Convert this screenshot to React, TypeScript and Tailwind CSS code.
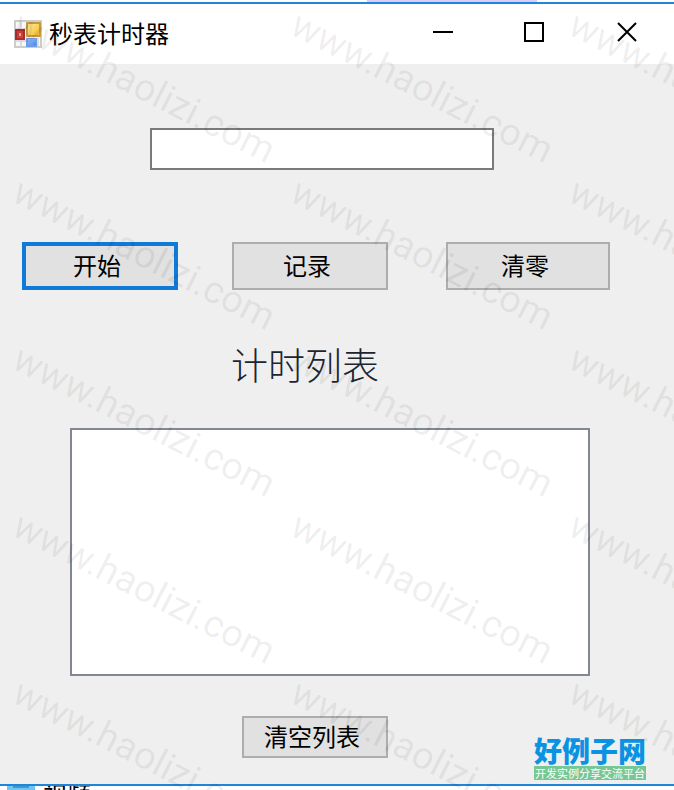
import { useState } from "react";
import type { ReactNode } from "react";

const WATERMARKS = Array.from({ length: 15 }, (_, i) => i);

function AppIcon() {
  return (
    <svg viewBox="0 0 28 28" className="h-7 w-7 shrink-0" aria-hidden="true">
      <defs>
        <linearGradient id="gold" x1="0" y1="0" x2="1" y2="1">
          <stop offset="0" stopColor="#ffe996" />
          <stop offset="1" stopColor="#f5bd30" />
        </linearGradient>
        <linearGradient id="sky" x1="0" y1="0" x2="1" y2="1">
          <stop offset="0" stopColor="#9cc4ff" />
          <stop offset="1" stopColor="#4a86e6" />
        </linearGradient>
      </defs>
      <rect x="1" y="1" width="26" height="26" fill="#f7f7f7" stroke="#cccccc" strokeWidth="2" />
      <path d="M7 1v9M7 20v7M1 9h10M1 21h11M24 18v9" stroke="#d4d4d4" strokeWidth="1.5" />
      <rect x="12" y="2" width="15" height="15" rx="1" fill="#c39a40" />
      <rect x="14" y="4" width="11" height="11" fill="url(#gold)" />
      <rect x="1" y="9" width="10" height="11" fill="#b02a2a" />
      <rect x="3" y="11" width="6" height="7" fill="#cb4540" />
      <rect x="5" y="13" width="2" height="3" fill="#f0a8a0" />
      <rect x="12" y="18" width="11" height="9" fill="#6f9be4" />
      <rect x="14" y="19" width="8" height="6" fill="url(#sky)" />
    </svg>
  );
}

function PushButton({
  className,
  onClick,
  children,
}: {
  className: string;
  onClick?: () => void;
  children: ReactNode;
}) {
  return (
    <button
      type="button"
      onClick={onClick}
      className={`bg-[#e1e1e1] pr-1.5 pb-0.5 text-2xl leading-none text-black ${className}`}
    >
      {children}
    </button>
  );
}

function Watermark() {
  return (
    <div
      aria-hidden="true"
      className="pointer-events-none absolute inset-0 overflow-hidden pt-0.5 pl-[26px]"
    >
      <div className="grid auto-rows-[167px] grid-cols-[repeat(3,278px)]">
        {WATERMARKS.map((n) => (
          <div
            key={n}
            className="origin-top-left rotate-[27deg] font-['Roboto',sans-serif] text-[38px] leading-[44px] whitespace-nowrap text-black/7"
          >
            www.haolizi.com
          </div>
        ))}
      </div>
    </div>
  );
}

export default function App() {
  const [time, setTime] = useState("");
  const [laps, setLaps] = useState<string[]>([]);

  return (
    <div className="relative flex min-h-screen flex-col overflow-hidden bg-white font-['Noto_Sans_CJK_SC',sans-serif]">
      <div className="flex h-[2px] justify-center pl-[230px]">
        <div className="w-[170px] bg-[#dccbfb]" />
      </div>

      <main className="flex grow flex-col border-y-2 border-[#1f85d8] bg-[#efefef]">
        <header className="flex h-[60px] items-center bg-white pl-[14px]">
          <AppIcon />
          <h1 className="grow pb-0.5 pl-[7px] text-2xl leading-8 text-black">秒表计时器</h1>
          <div className="flex h-full pb-1">
            <button type="button" aria-label="最小化" className="flex w-[90px] items-center justify-center">
              <svg viewBox="0 0 20 20" className="h-5 w-5">
                <path d="M0 10h20" stroke="#000" strokeWidth="2" />
              </svg>
            </button>
            <button type="button" aria-label="最大化" className="flex w-[92px] items-center justify-center">
              <svg viewBox="0 0 20 20" className="h-5 w-5">
                <rect x="1" y="1" width="18" height="18" fill="none" stroke="#000" strokeWidth="2" />
              </svg>
            </button>
            <button type="button" aria-label="关闭" className="flex w-[94px] items-center justify-center">
              <svg viewBox="0 0 20 20" className="h-5 w-5">
                <path d="M1 1l18 18M19 1L1 19" stroke="#000" strokeWidth="2" />
              </svg>
            </button>
          </div>
        </header>

        <div className="flex pt-16 pr-[180px] pl-[150px]">
          <input
            type="text"
            aria-label="计时"
            value={time}
            onChange={(e) => setTime(e.target.value)}
            className="h-[42px] w-full border-2 border-[#7a7a7a] bg-white px-2 text-2xl"
          />
        </div>

        <div className="grid grid-cols-[156fr_54fr_156fr_58fr_164fr] pt-[72px] pr-16 pl-[22px]">
          <PushButton className="h-12 border-4 border-[#0f7ad8]">开始</PushButton>
          <PushButton
            className="col-start-3 h-12 border-2 border-[#adadad]"
            onClick={() => setLaps([...laps, time])}
          >
            记录
          </PushButton>
          <PushButton
            className="col-start-5 h-12 border-2 border-[#adadad]"
            onClick={() => setTime("")}
          >
            清零
          </PushButton>
        </div>

        <h2
          id="laps"
          className="pt-[50px] pr-16 text-center text-[37px] leading-[48px] font-light text-[#1c2430]"
        >
          计时列表
        </h2>

        <ul
          aria-labelledby="laps"
          className="mt-10 mr-[84px] ml-[70px] h-[248px] overflow-auto border-2 border-[#828790] bg-white px-2 text-2xl"
        >
          {laps.map((lap, i) => (
            <li key={i}>{lap}</li>
          ))}
        </ul>

        <div className="grid grow grid-cols-[242fr_146px_258fr] items-start pt-10 pr-7">
          <PushButton
            className="col-start-2 h-[42px] border-2 border-[#adadad]"
            onClick={() => setLaps([])}
          >
            清空列表
          </PushButton>
          <div className="w-[112px] justify-self-end pt-5">
            <div className="pb-0.5 text-[28px] leading-7 font-black text-[#0a93e2]">好例子网</div>
            <div className="bg-[#77c795] text-center text-[11px] leading-[14px] whitespace-nowrap text-white">
              开发实例分享交流平台
            </div>
          </div>
        </div>
      </main>

      <div className="flex h-1 gap-2 overflow-hidden pl-[7px]">
        <div className="flex w-7 justify-center bg-[#72c6ee]">
          <div className="h-[2px] w-4 bg-[#3b9bd0]" />
        </div>
        <div className="text-2xl leading-4 text-black">视频</div>
      </div>

      <Watermark />
    </div>
  );
}
